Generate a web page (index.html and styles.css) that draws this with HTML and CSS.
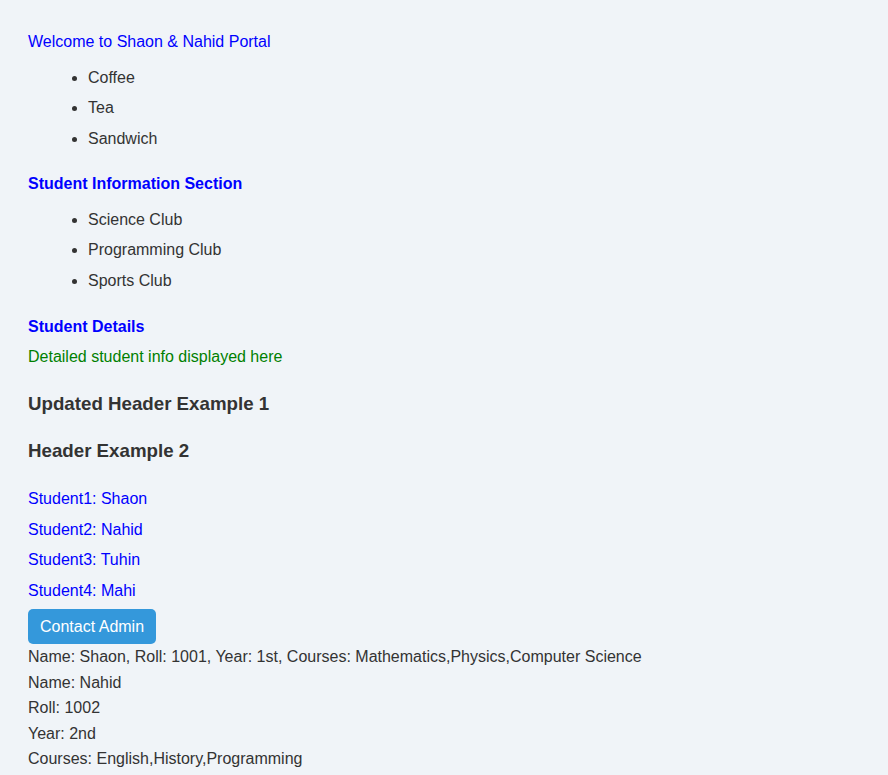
FILE: index.html
```html
<!DOCTYPE html>
<html lang="en">
<head>
<meta charset="utf-8">
<title>Portal</title>
<link rel="stylesheet" href="styles.css">
</head>
<body>
<div class="page">
  <div class="welcome">Welcome to Shaon &amp; Nahid Portal</div>
  <ul class="list first">
    <li>Coffee</li>
    <li>Tea</li>
    <li>Sandwich</li>
  </ul>
  <h3 class="section-title sis">Student Information Section</h3>
  <ul class="list second">
    <li>Science Club</li>
    <li>Programming Club</li>
    <li>Sports Club</li>
  </ul>
  <h3 class="section-title details">Student Details</h3>
  <p class="info">Detailed student info displayed here</p>
  <h2 class="header h1x">Updated Header Example 1</h2>
  <h2 class="header h2x">Header Example 2</h2>
  <p class="student s1">Student1: Shaon</p>
  <p class="student">Student2: Nahid</p>
  <p class="student">Student3: Tuhin</p>
  <p class="student">Student4: Mahi</p>
  <button class="btn">Contact Admin</button>
  <div class="line">Name: Shaon, Roll: 1001, Year: 1st, Courses: Mathematics,Physics,Computer Science</div>
  <div class="line">Name: Nahid</div>
  <div class="line">Roll: 1002</div>
  <div class="line">Year: 2nd</div>
  <div class="line">Courses: English,History,Programming</div>
</div>
</body>
</html>
```
FILE: styles.css
```css
html, body {
  background: #f0f4f8;
}
body {
  margin: 0;
  padding: 28.7px 28px 28px;
  font-family: "Liberation Sans", Arial, sans-serif;
  font-size: 16px;
  line-height: 1.6;
  color: #333;
}
.page {
  display: flex;
  flex-direction: column;
  align-items: flex-start;
}
.welcome {
  color: #0000ff;
  margin: 0;
}
.list {
  margin: 10.6px 0 0;
  padding-left: 60px;
}
.list li + li {
  margin-top: 5px;
}
.section-title {
  color: #0000ff;
  font-size: 16px;
  font-weight: bold;
  margin: 0;
}
.sis {
  margin-top: 19.4px;
}
.second {
  margin-top: 10px;
}
.details {
  margin-top: 20.4px;
}
.info {
  color: #008000;
  margin: 5px 0 0;
}
.header {
  font-size: 18.72px;
  font-weight: bold;
  margin: 0;
}
.h1x {
  margin-top: 18.5px;
}
.h2x {
  margin-top: 18px;
}
.student {
  color: #0000ff;
  margin: 5.3px 0 0;
}
.s1 {
  margin-top: 19.3px;
}
.btn {
  margin-top: 5px;
  background: #3498db;
  color: #fff;
  border: none;
  border-radius: 5px;
  padding: 8px 12px;
  height: 35px;
  font-family: "Liberation Sans", Arial, sans-serif;
  font-size: 16px;
  line-height: 19px;
}
.line {
  margin: 0;
}
```
